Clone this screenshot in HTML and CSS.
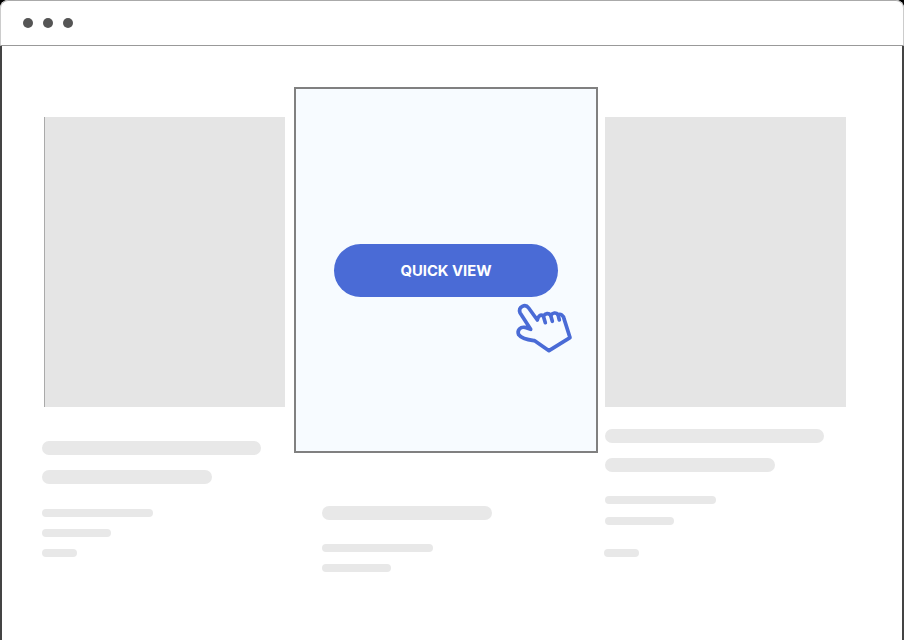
FILE: index.html
```html
<!DOCTYPE html>
<html lang="en">
  <head>
    <meta charset="UTF-8" />
    <meta name="viewport" content="width=device-width, initial-scale=1.0" />
    <title>Quick view</title>
    <link rel="stylesheet" href="styles.css">
  </head>
  <body>
    <div class="window">
      <div class="window-bar">
        <span class="dot"></span>
        <span class="dot"></span>
        <span class="dot"></span>
      </div>
      <div class="products">
        <div class="product product-left">
          <div class="product-image"></div>
          <div class="bar bar-lg bar-w219"></div>
          <div class="bar bar-lg bar-w170"></div>
          <div class="bar bar-sm bar-w111 bar-group-left"></div>
          <div class="bar bar-sm bar-w69"></div>
          <div class="bar bar-sm bar-w35"></div>
        </div>
        <div class="product product-center">
          <div class="product-card">
            <button class="quick-view">QUICK VIEW</button>
            <svg class="hand" viewBox="0 0 270 210" fill="none" stroke="#4a6bd6" stroke-width="11" stroke-linejoin="round" stroke-linecap="round">
              <path d="M60 68C54 50 76 40 86 54L112 90C114 78 122 72 130 78C136 70 146 68 152 76C158 68 168 66 174 74C182 70 190 76 192 86L210 143L147 182L104 152C88 150 66 148 56 134C50 120 62 110 74 112L92 118Z" />
              <path d="M130 78L136 98M152 76L157 94M174 74L178 90" />
            </svg>
          </div>
          <div class="product-text">
            <div class="bar bar-lg bar-w170"></div>
            <div class="bar bar-sm bar-w111 bar-group"></div>
            <div class="bar bar-sm bar-w69"></div>
          </div>
        </div>
        <div class="product product-right">
          <div class="product-image"></div>
          <div class="bar bar-lg bar-w219"></div>
          <div class="bar bar-lg bar-w170"></div>
          <div class="bar bar-sm bar-w111 bar-group"></div>
          <div class="bar bar-sm bar-w69 bar-mid"></div>
          <div class="bar bar-sm bar-w35 bar-last"></div>
        </div>
      </div>
    </div>
  </body>
</html>
```

FILE: styles.css
```css
html {
  background-color: #000;
}
body {
  margin: 0;
  font-family: Inter, "Liberation Sans", sans-serif;
}
.window {
  width: 904px;
  height: 640px;
  box-sizing: border-box;
  background-color: #fff;
  border-radius: 8px 8px 0 0;
  overflow: hidden;
}
.window-bar {
  height: 46px;
  box-sizing: border-box;
  display: flex;
  align-items: center;
  gap: 10px;
  padding-left: 22px;
  background-color: #fff;
  border-top: 1px solid #aaa;
  border-left: 1px solid #ccc;
  border-right: 1px solid #ccc;
  border-bottom: 1px solid #999;
  border-radius: 8px 8px 0 0;
}
.dot {
  width: 10px;
  height: 10px;
  border-radius: 50%;
  background-color: #555;
}
.products {
  height: 594px;
  box-sizing: border-box;
  display: flex;
  padding: 41px 0 0 42px;
  border-left: 2px solid #444;
  border-right: 2px solid #444;
}
.product-left {
  width: 243px;
  margin: 30px 0 0 -2px;
}
.product-center {
  width: 304px;
  margin-left: 9px;
}
.product-right {
  width: 241px;
  margin: 30px 0 0 7px;
}
.product-image {
  width: 241px;
  height: 290px;
  box-sizing: border-box;
  background-color: #e5e5e5;
}
.product-left .product-image {
  margin-left: 2px;
  margin-bottom: 34px;
  border-left: 1px solid #aaa;
}
.product-right .product-image {
  margin-bottom: 22px;
}
.product-card {
  position: relative;
  height: 366px;
  box-sizing: border-box;
  display: flex;
  justify-content: center;
  align-items: center;
  background-color: #f7fbff;
  border: 2px solid #808080;
}
.quick-view {
  width: 224px;
  height: 53px;
  border: none;
  border-radius: 27px;
  padding-top: 2px;
  background-color: #4a6bd6;
  color: #fff;
  font-family: inherit;
  font-size: 14.8px;
  font-weight: 700;
}
.hand {
  position: absolute;
  left: 204px;
  top: 201px;
  width: 90px;
  height: 70px;
}
.product-text {
  padding: 53px 0 0 28px;
}
.bar {
  background-color: #e8e8e8;
}
.bar-lg {
  height: 14px;
  border-radius: 7px;
  margin-bottom: 15px;
}
.bar-sm {
  height: 8px;
  border-radius: 4px;
  margin-bottom: 12px;
}
.bar-group {
  margin-top: 24px;
}
.bar-group-left {
  margin-top: 25px;
}
.bar-mid {
  margin-top: 13px;
}
.bar-last {
  margin-top: 24px;
  margin-left: -1px;
}
.bar-w219 {
  width: 219px;
}
.bar-w170 {
  width: 170px;
}
.bar-w111 {
  width: 111px;
}
.bar-w69 {
  width: 69px;
}
.bar-w35 {
  width: 35px;
}
```
